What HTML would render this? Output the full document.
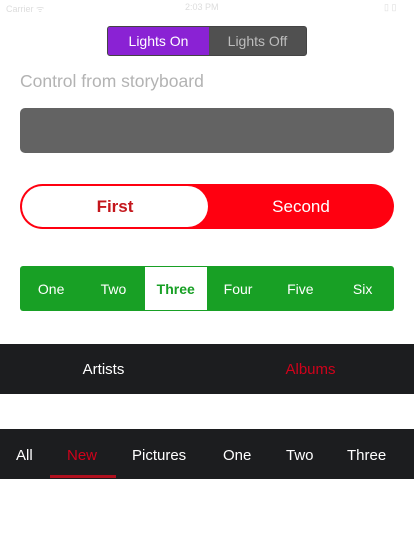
<!DOCTYPE html>
<html><head><meta charset="utf-8"><style>
*{margin:0;padding:0;box-sizing:border-box}
body{width:414px;height:543px;background:#fff;font-family:"Liberation Sans",sans-serif;position:relative;overflow:hidden}
.a{position:absolute}
.c{display:flex;align-items:center;justify-content:center}
</style></head><body>
<div class="a" style="left:6px;top:2px;font-size:9px;color:#ddd">Carrier ᯤ</div>
<div class="a" style="left:185px;top:2px;font-size:9px;color:#ddd">2:03 PM</div>
<div class="a" style="left:384px;top:2px;font-size:9px;color:#ddd">▯ ▯</div>

<div class="a" style="left:107px;top:26px;width:200px;height:30px;background:#505050;border-radius:3px;border:1px solid #444;overflow:hidden;display:flex">
  <div class="c" style="width:101px;height:100%;background:#8a22d4;color:#fff;font-size:14px">Lights On</div>
  <div class="c" style="flex:1;color:#bdbdbd;font-size:14px">Lights Off</div>
</div>

<div class="a" style="left:20px;top:71px;font-size:17.5px;color:#b3b3b3">Control from storyboard</div>

<div class="a" style="left:20px;top:108px;width:374px;height:45px;background:#636363;border-radius:5px"></div>

<div class="a" style="left:20px;top:184px;width:374px;height:45px;background:#ff0010;border-radius:23px">
  <div class="a c" style="left:2px;top:2px;width:186px;height:41px;background:#fff;border-radius:21px;color:#c4161c;font-size:17px;font-weight:bold">First</div>
  <div class="a c" style="left:188px;top:0;width:186px;height:45px;color:#fff;font-size:17px">Second</div>
</div>

<div class="a" style="left:20px;top:266px;width:374px;height:45px;background:#18a025;border-radius:3px;display:flex;color:#fff;font-size:14px">
  <div class="c" style="width:62.3px">One</div>
  <div class="c" style="width:62.3px">Two</div>
  <div class="c" style="width:62.3px;background:#fff;color:#18a025;font-weight:bold;margin:1px 0;height:43px">Three</div>
  <div class="c" style="width:62.3px">Four</div>
  <div class="c" style="width:62.3px">Five</div>
  <div class="c" style="width:62.3px">Six</div>
</div>

<div class="a" style="left:0;top:344px;width:414px;height:50px;background:#1c1d1f;font-size:15px">
  <div class="a c" style="left:0;top:0;width:207px;height:50px;color:#fff">Artists</div>
  <div class="a c" style="left:207px;top:0;width:207px;height:50px;color:#d0021b">Albums</div>
</div>

<div class="a" style="left:0;top:429px;width:414px;height:50px;background:#1c1d1f;font-size:15px;color:#fff">
  <div class="a" style="left:16px;top:18px">All</div>
  <div class="a" style="left:67px;top:18px;color:#d0021b">New</div>
  <div class="a" style="left:50px;top:46px;width:66px;height:3px;background:#b0101e"></div>
  <div class="a" style="left:132px;top:18px">Pictures</div>
  <div class="a" style="left:223px;top:18px">One</div>
  <div class="a" style="left:286px;top:18px">Two</div>
  <div class="a" style="left:347px;top:18px">Three</div>
</div>
</body></html>
